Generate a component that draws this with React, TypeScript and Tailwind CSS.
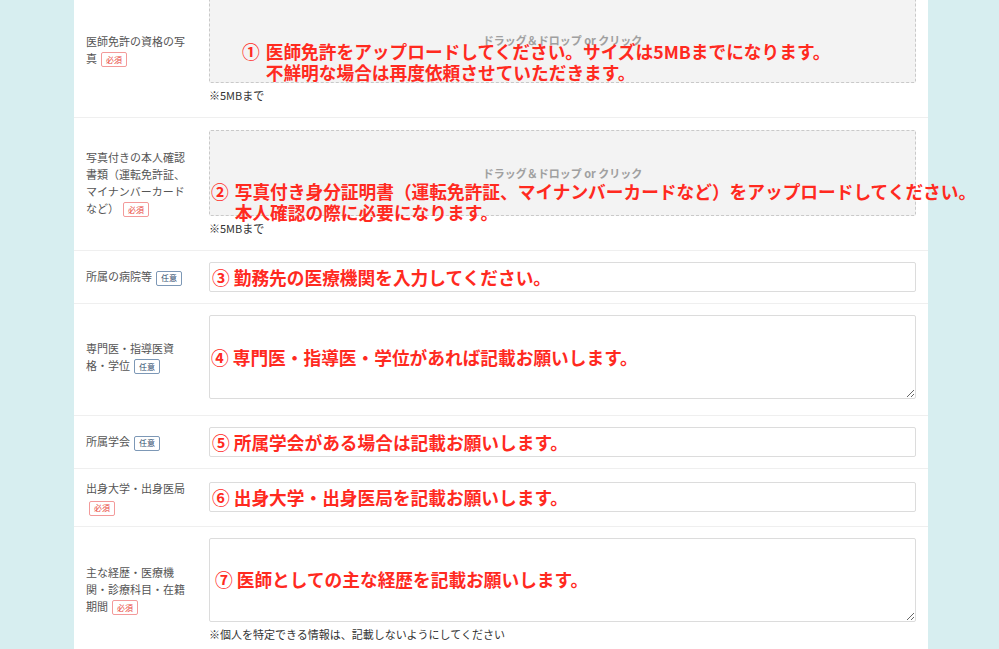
import React from 'react';

const JP = { fontFamily: '"Noto Sans CJK JP", "Noto Sans", sans-serif' };

function Badge({ kind }: { kind: 'req' | 'opt' }) {
  if (kind === 'req') {
    return (
      <span className="ml-[4px] inline-flex h-[15px] items-center rounded-[2px] border border-[#f39a9a] bg-white px-[4px] align-middle text-[8px] leading-none text-[#e8453c]">
        必須
      </span>
    );
  }
  return (
    <span className="ml-[4px] inline-flex h-[15px] items-center rounded-[2px] border border-[#7d98b6] bg-white px-[4px] align-middle text-[8px] leading-none text-[#2f4d6e]">
      任意
    </span>
  );
}

function Label({ children }: { children: React.ReactNode }) {
  return (
    <div className="w-[123px] shrink-0 pr-[6px] text-[11px] leading-[17px] text-[#555]">{children}</div>
  );
}

function Note({ children }: { children: React.ReactNode }) {
  return <div className="mt-[4px] text-[11px] leading-[16px] text-[#333]">{children}</div>;
}

function Red({ children, className = '' }: { children: React.ReactNode; className?: string }) {
  return (
    <div className={`pointer-events-none whitespace-nowrap text-[17.7px] font-bold leading-[21px] text-[#ff2a1f] ${className}`}>
      {children}
    </div>
  );
}

function DropZone({ children }: { children?: React.ReactNode }) {
  return (
    <div className="relative h-[86px] rounded-[2px] border border-dashed border-[#c9c9c9] bg-[#f3f3f3]">
      <div className="flex h-full items-center justify-center text-[11px] font-bold text-[#a0a0a0]">
        ドラッグ＆ドロップ or クリック
      </div>
      {children}
    </div>
  );
}

function TextInput({ children }: { children: React.ReactNode }) {
  return (
    <div className="relative h-[30px] rounded-[2px] border border-[#dcdcdc] bg-white">
      <div className="absolute inset-0 flex items-center pl-[2px]">{children}</div>
    </div>
  );
}

function TextArea({ children, left = 2 }: { children: React.ReactNode; left?: number }) {
  return (
    <div className="relative">
      <textarea className="block h-[84px] w-full resize-y rounded-[2px] border border-[#dcdcdc] bg-white outline-none" />
      <div className="absolute inset-0 flex items-center" style={{ paddingLeft: left }}>
        {children}
      </div>
    </div>
  );
}

export default function App() {
  return (
    <div className="h-[649px] w-full overflow-hidden bg-[#d7eef0]" style={JP}>
      <div className="-mt-[15px] ml-[74px] w-[854px] bg-white">
        {/* 医師免許 */}
        <div className="flex items-center border-b border-[#efefef] px-[12px] pb-[14px] pt-[12px]">
          <Label>
            医師免許の資格の写
            <br />
            真<Badge kind="req" />
          </Label>
          <div className="flex-1">
            <DropZone>
              <Red className="absolute left-[32px] top-[43px] flex">
                <span className="mr-[6px]">①</span>
                <span>
                  医師免許をアップロードしてください。サイズは5MBまでになります。
                  <br />
                  不鮮明な場合は再度依頼させていただきます。
                </span>
              </Red>
            </DropZone>
            <Note>※5MBまで</Note>
          </div>
        </div>

        {/* 本人確認書類 */}
        <div className="flex items-center border-b border-[#efefef] px-[12px] pb-[14px] pt-[12px]">
          <Label>
            写真付きの本人確認
            <br />
            書類（運転免許証、
            <br />
            マイナンバーカード
            <br />
            など）
            <Badge kind="req" />
          </Label>
          <div className="flex-1">
            <DropZone>
              <Red className="absolute left-[1px] top-[50px] flex">
                <span className="mr-[6px]">②</span>
                <span>
                  写真付き身分証明書（運転免許証、マイナンバーカードなど）をアップロードしてください。
                  <br />
                  本人確認の際に必要になります。
                </span>
              </Red>
            </DropZone>
            <Note>※5MBまで</Note>
          </div>
        </div>

        {/* 所属の病院等 */}
        <div className="flex items-center border-b border-[#efefef] px-[12px] pb-[11px] pt-[11px]">
          <Label>
            所属の病院等
            <Badge kind="opt" />
          </Label>
          <div className="flex-1">
            <TextInput>
              <Red>③ 勤務先の医療機関を入力してください。</Red>
            </TextInput>
          </div>
        </div>

        {/* 専門医 */}
        <div className="flex items-center border-b border-[#efefef] px-[12px] pb-[16px] pt-[11px]">
          <Label>
            専門医・指導医資
            <br />
            格・学位
            <Badge kind="opt" />
          </Label>
          <div className="flex-1">
            <TextArea>
              <Red>④ 専門医・指導医・学位があれば記載お願いします。</Red>
            </TextArea>
          </div>
        </div>

        {/* 所属学会 */}
        <div className="flex items-center border-b border-[#efefef] px-[12px] pb-[11px] pt-[11px]">
          <Label>
            所属学会
            <Badge kind="opt" />
          </Label>
          <div className="flex-1">
            <TextInput>
              <Red>⑤ 所属学会がある場合は記載お願いします。</Red>
            </TextInput>
          </div>
        </div>

        {/* 出身大学 */}
        <div className="flex items-center border-b border-[#efefef] px-[12px] pb-[10px] pt-[10px]">
          <Label>
            <div className="leading-[18px]">出身大学・出身医局</div>
            <div className="-ml-[1px] leading-[18px]">
              <Badge kind="req" />
            </div>
          </Label>
          <div className="flex-1">
            <TextInput>
              <Red>⑥ 出身大学・出身医局を記載お願いします。</Red>
            </TextInput>
          </div>
        </div>

        {/* 主な経歴 */}
        <div className="flex items-center px-[12px] pb-[20px] pt-[11px]">
          <Label>
            主な経歴・医療機
            <br />
            関・診療科目・在籍
            <br />
            期間
            <Badge kind="req" />
          </Label>
          <div className="flex-1">
            <TextArea left={6}>
              <Red>⑦ 医師としての主な経歴を記載お願いします。</Red>
            </TextArea>
            <Note>
              <span className="mt-[4px] block">※個人を特定できる情報は、記載しないようにしてください</span>
            </Note>
          </div>
        </div>
      </div>
    </div>
  );
}
